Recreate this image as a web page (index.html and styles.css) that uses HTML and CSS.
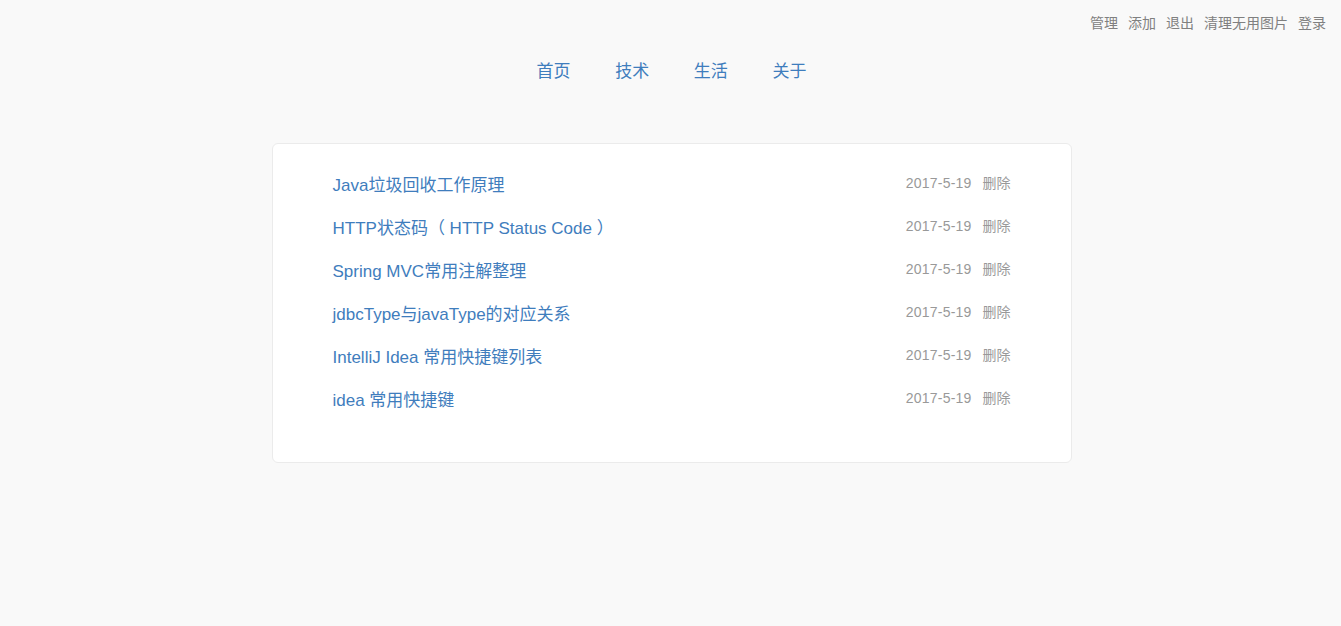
FILE: index.html
```html
<!DOCTYPE html>
<html lang="zh-CN">
<head>
<meta charset="utf-8">
<title>博客</title>
<link rel="stylesheet" href="styles.css">
</head>
<body>
<div class="topbar">
  <a href="#">管理</a>
  <a href="#">添加</a>
  <a href="#">退出</a>
  <a href="#">清理无用图片</a>
  <a href="#">登录</a>
</div>
<nav class="nav">
  <a href="#">首页</a>
  <a href="#">技术</a>
  <a href="#">生活</a>
  <a href="#">关于</a>
</nav>
<main class="card">
  <div class="row"><a class="title" href="#">Java垃圾回收工作原理</a><span class="meta"><span class="date">2017-5-19</span><a class="del" href="#">删除</a></span></div>
  <div class="row"><a class="title" href="#">HTTP状态码（ HTTP Status Code ）</a><span class="meta"><span class="date">2017-5-19</span><a class="del" href="#">删除</a></span></div>
  <div class="row"><a class="title" href="#">Spring MVC常用注解整理</a><span class="meta"><span class="date">2017-5-19</span><a class="del" href="#">删除</a></span></div>
  <div class="row"><a class="title" href="#">jdbcType与javaType的对应关系</a><span class="meta"><span class="date">2017-5-19</span><a class="del" href="#">删除</a></span></div>
  <div class="row"><a class="title" href="#">IntelliJ Idea 常用快捷键列表</a><span class="meta"><span class="date">2017-5-19</span><a class="del" href="#">删除</a></span></div>
  <div class="row"><a class="title" href="#">idea 常用快捷键</a><span class="meta"><span class="date">2017-5-19</span><a class="del" href="#">删除</a></span></div>
</main>
</body>
</html>
```
FILE: styles.css
```css
html, body {
  margin: 0;
  padding: 0;
  background: #f9f9f9;
  font-family: "Liberation Sans", "Noto Sans CJK SC", sans-serif;
}
a {
  text-decoration: none;
}
.topbar {
  display: flex;
  justify-content: flex-end;
  gap: 10px;
  padding: 13px 15px 0;
  font-size: 14px;
  line-height: 20px;
}
.topbar a {
  color: #808080;
}
.nav {
  display: flex;
  justify-content: center;
  margin-top: 28px;
  margin-left: 2px;
  font-size: 17px;
  line-height: 22px;
}
.nav a {
  color: #3f7dbd;
  padding: 0 22.3px;
}
.card {
  box-sizing: border-box;
  width: 800px;
  margin: 60px 0 0 calc(50% - 399px);
  padding: 18px 60px 42px;
  background: #fff;
  border: 1px solid #ebebeb;
  border-radius: 6px;
}
.row {
  display: flex;
  justify-content: space-between;
  align-items: center;
  height: 43px;
}
.title {
  color: #3f7dbd;
  font-size: 17px;
}
.meta {
  display: flex;
  align-items: center;
  gap: 11px;
  font-size: 14px;
  line-height: 20px;
  color: #999;
  margin-top: -2px;
}
.date {
  letter-spacing: 0.2px;
  margin-top: 1px;
}
.del {
  color: #999;
}
```
